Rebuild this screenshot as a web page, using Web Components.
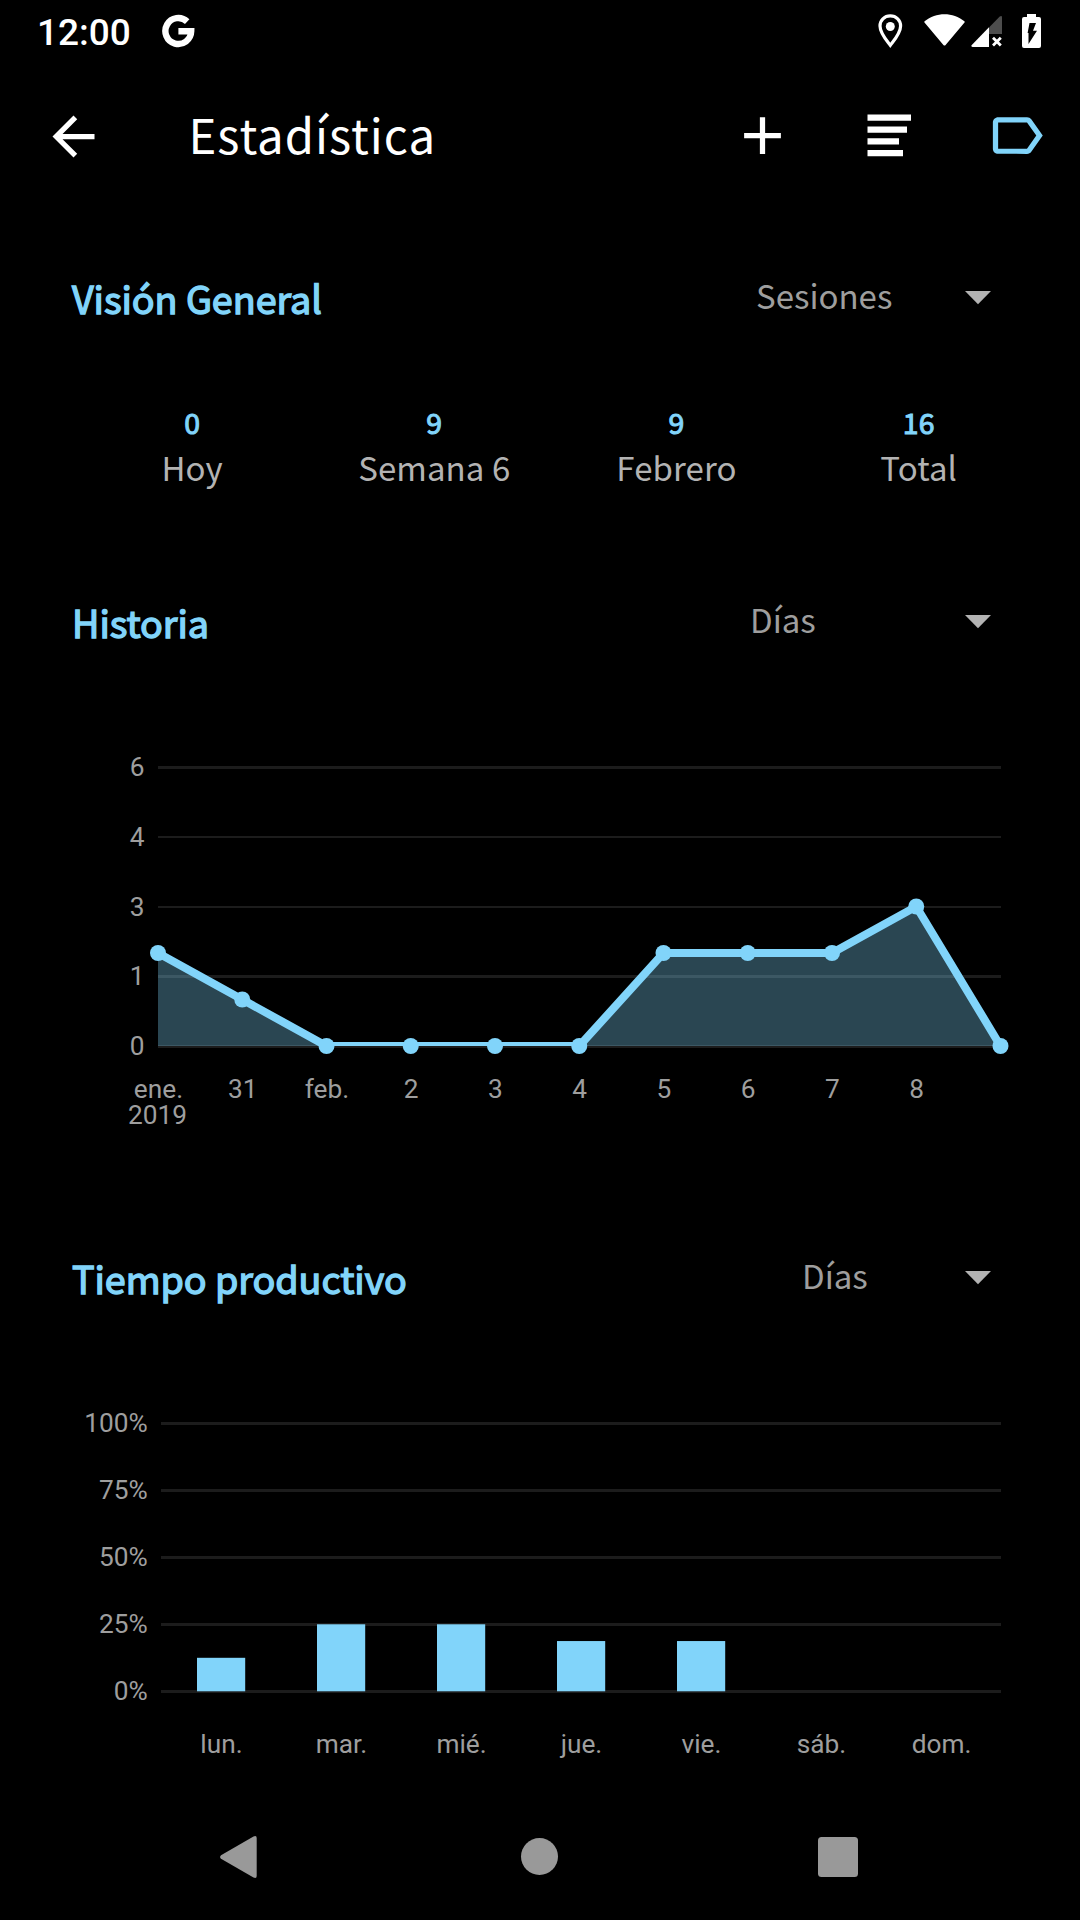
<!DOCTYPE html>
<html lang="es">
<head>
<meta charset="utf-8">
<title>Estadística</title>
<style>
  :root {
    --color-accent: #81d4fa;
    --color-text: #b3b3b3;
    --color-option: #9e9e9e;
    --font-main: "Noto Sans CJK SC", "Noto Sans", sans-serif;
    --font-system: Roboto, "Liberation Sans", sans-serif;
  }

  body {
    margin: 0;
    width: 1080px;
    height: 1920px;
    overflow: hidden;
    background: #000;
    color: #fff;
    font-family: var(--font-main);
  }
</style>
</head>
<body>
<stats-screen></stats-screen>

<script>
/** Base class: attaches the shadow root and renders once connected. */
class BaseElement extends HTMLElement {
  constructor() {
    super();
    this.attachShadow({ mode: 'open' });
  }

  connectedCallback() {
    this.shadowRoot.innerHTML = this.template();
  }
}

/** System status bar: clock, notification and signal icons. */
class StatusBar extends BaseElement {
  template() {
    return `
      <style>
        :host {
          display: flex;
          height: 63px;
          box-sizing: border-box;
          padding: 0 39px 0 37px;
          font: 500 37px/66px var(--font-system);
        }

        .clock {
          width: 124.5px;
        }

        svg {
          display: block;
          margin-top: 14px;
          flex-shrink: 0;
        }

        .icons {
          display: flex;
          margin-left: auto;
        }
      </style>
      <span class="clock">12:00</span>
      <svg width="33" height="36" viewBox="0 0 33 36">
        <path d="M25.2 7.6A12.9 13 0 1 0 29.2 17.3H16.4" fill="none" stroke="#fff" stroke-width="6.4"/>
      </svg>
      <div class="icons">
        <svg width="46" height="36" viewBox="0 0 46 36">
          <path d="M12.3 1.9C6.3 1.9 2 6.3 2 11.9C2 18.9 8.3 26 12.3 31.4C16.3 26 22.600 18.900 22.600 11.900C22.600 6.300 18.300 1.900 12.300 1.900Z" fill="none" stroke="#fff" stroke-width="3.200"/>
          <circle cx="12.300" cy="12.500" r="4.500" fill="#fff"/>
        </svg>
        <svg width="46.5" height="36" viewBox="0 0 46.5 36">
          <path d="M.6 7.2C12-2.2 29-2.2 40.4 7.2Q41 8 40.3 8.8L21.6 31Q20.5 32 19.4 31L.7 8.8Q0 8 .6 7.2Z" fill="#fff"/>
        </svg>
        <svg width="51.5" height="36" viewBox="0 0 51.5 36">
          <path d="M18 13.5L28.5 2.7Q31 1 31 3.500V20H18Z" fill="#4d4d4d"/>
          <path d="M18 13.2V33H1.5Q-.5 32.5.8 31Z" fill="#fff"/>
          <path d="M22 23.8L29.8 31.6M29.8 23.8L22 31.6" stroke="#fff" stroke-width="2.8"/>
        </svg>
        <svg width="19" height="36" viewBox="0 0 19 36">
          <path d="M5 0H14V3H17Q19 3 19 5V32Q19 34 17 34H2Q0 34 0 32V5Q0 3 2 3H5Z" fill="#fff"/>
          <path d="M7.5 9L14 9L11 16.7H15L6.5 30V19H5.6Z" fill="#000"/>
        </svg>
      </div>
    `;
  }
}

/** App bar with back button, title and toolbar actions. */
class AppBar extends BaseElement {
  template() {
    return `
      <style>
        :host {
          display: flex;
          height: 147px;
          box-sizing: border-box;
          padding: 41px 32px 0 42px;
        }

        svg {
          display: block;
          width: 63px;
          height: 63px;
          fill: #fff;
        }

        .back {
          margin-top: 1px;
        }

        h1 {
          margin: 0 0 0 83.5px;
          font-size: 47.3px;
          line-height: 60px;
          font-weight: 400;
          letter-spacing: 0.98px;
        }

        .actions {
          display: flex;
          gap: 64px;
          margin-left: auto;
        }
      </style>
      <svg class="back" viewBox="0 0 24 24"><path d="M20 11H7.83l5.59-5.59L12 4l-8 8 8 8 1.41-1.41L7.83 13H20v-2z"/></svg>
      <h1><slot></slot></h1>
      <div class="actions">
        <svg viewBox="0 0 24 24"><path d="M19 13h-6v6h-2v-6H5v-2h6V5h2v6h6v2z"/></svg>
        <svg viewBox="0 0 63 63"><path d="M9.5 10.5h43.5v6.3H9.5zM9.5 22.4h39.5v6.3H9.5zM9.5 34.2h31.5v6.3H9.5zM9.5 46h35.5v6.3H9.5z"/></svg>
        <svg viewBox="0 0 24 24" style="fill: var(--color-accent)"><path d="M17.63 5.84C17.27 5.33 16.67 5 16 5L5 5.01C3.9 5.01 3 5.9 3 7v10c0 1.1.9 1.99 2 1.99L16 19c.67 0 1.27-.33 1.63-.84L22 12l-4.37-6.16zM16 17H5V7h11l3.55 5L16 17z"/></svg>
      </div>
    `;
  }
}

/** Section with a heading, a spinner and slotted content. */
class StatsSection extends BaseElement {
  template() {
    return `
      <style>
        :host {
          display: block;
          box-sizing: border-box;
          padding-top: 57px;
        }

        header {
          display: flex;
          height: 60px;
          padding: 0 89.5px 0 72px;
        }

        h2 {
          margin: 0;
          flex: 1;
          font-size: 37.7px;
          line-height: 62px;
          font-weight: 400;
          color: var(--color-accent);
          -webkit-text-stroke: 1.4px var(--color-accent);
          letter-spacing: -0.05px;
        }

        .option {
          width: var(--option-width);
          padding-top: 2.5px;
          font-size: 33px;
          line-height: 50px;
          color: var(--color-option);
        }

        svg {
          display: block;
          margin-top: 24px;
        }
      </style>
      <header>
        <h2>${this.getAttribute('heading')}</h2>
        <span class="option">${this.getAttribute('option')}</span>
        <svg width="26" height="14" viewBox="0 0 26 14"><path d="M0 0H26L13 13.3Z" fill="#b3b3b3"/></svg>
      </header>
      <slot></slot>
    `;
  }
}

/** Single overview number with its caption. */
class StatValue extends BaseElement {
  template() {
    return `
      <style>
        :host {
          display: flex;
          flex-direction: column;
          align-items: center;
          color: var(--color-text);
          font-size: 33px;
          line-height: 50px;
          letter-spacing: 0.1px;
          white-space: nowrap;
        }

        .value {
          color: var(--color-accent);
          font-size: 28.4px;
          line-height: 40px;
          -webkit-text-stroke: 1px var(--color-accent);
        }
      </style>
      <span class="value">${this.getAttribute('value')}</span>
      <span><slot></slot></span>
    `;
  }
}

const CHART_STYLE = `
  <style>
    :host {
      display: block;
    }

    svg {
      display: block;
    }

    text {
      font: 26.25px var(--font-system);
      fill: #9e9e9e;
    }

    .grid {
      fill: #1c1c1c;
    }
  </style>
`;

/** Line chart of sessions per day. */
class HistoryChart extends BaseElement {
  template() {
    const values = [2, 1, 0, 0, 0, 0, 2, 2, 2, 3, 0];
    const labels = ['ene.', '31', 'feb.', '2', '3', '4', '5', '6', '7', '8'];
    // label, top of the line, thickness
    const ticks = [['6', 115, 3], ['4', 185, 2], ['3', 255, 2], ['1', 324, 3], ['0', 394, 3]];
    const left = 158;
    const bottom = 395;
    const x = i => left + i * 84.25;
    const y = v => bottom - v * 46.5;
    const points = values.map((v, i) => `${x(i)},${y(v)}`).join(' ');

    return `${CHART_STYLE}
      <svg width="1080" height="539" viewBox="0 0 1080 539">
        <clipPath id="plot"><rect x="150" y="0" width="860" height="395"/></clipPath>
        ${ticks.map(([label, top, h]) => `
          <rect class="grid" x="${left}" y="${top}" width="843" height="${h}"/>
          <text x="144.5" y="${top + 9.5}" text-anchor="end">${label}</text>
        `).join('')}
        <g clip-path="url(#plot)">
          <polygon points="${left},${bottom} ${points}" fill="#81d4fa" fill-opacity="0.33"/>
          <polyline points="${points}" fill="none" stroke="#81d4fa" stroke-width="8"/>
        </g>
        ${values.map((v, i) => `<circle cx="${x(i)}" cy="${y(v)}" r="8" fill="#81d4fa"/>`).join('')}
        ${labels.map((label, i) => `<text x="${x(i) + 0.5}" y="446.5" text-anchor="middle">${label}</text>`).join('')}
        <text x="157.6" y="472.5" text-anchor="middle">2019</text>
      </svg>
    `;
  }
}

/** Bar chart of productive time per weekday. */
class ProductiveChart extends BaseElement {
  template() {
    const days = [
      ['lun.', 12.5], ['mar.', 25], ['mié.', 25], ['jue.', 18.75],
      ['vie.', 18.75], ['sáb.', 0], ['dom.', 0]
    ];
    const ticks = ['100%', '75%', '50%', '25%', '0%'];
    const bottom = 384.3;
    const center = i => 221 + i * 120;

    return `${CHART_STYLE}
      <svg width="1080" height="487" viewBox="0 0 1080 487">
        ${ticks.map((label, i) => `
          <rect class="grid" x="161" y="${115 + i * 67}" width="840" height="3"/>
          <text x="147.7" y="${124.5 + i * 67}" text-anchor="end">${label}</text>
        `).join('')}
        ${days.map(([label, value], i) => `
          <rect x="${center(i) - 24}" y="${bottom - value * 2.68}" width="48.2" height="${value * 2.68}" fill="#81d4fa"/>
          <text x="${center(i) + 0.5}" y="446" text-anchor="middle">${label}</text>
        `).join('')}
      </svg>
    `;
  }
}

/** System navigation buttons. */
class NavigationBar extends BaseElement {
  template() {
    return `
      <style>
        :host {
          display: flex;
          height: 126px;
          align-items: center;
          justify-content: space-between;
          box-sizing: border-box;
          padding: 0 220px 0 218px;
        }

        svg {
          display: block;
          fill: #999;
        }
      </style>
      <svg width="42" height="44" viewBox="0 0 42 44"><path d="M3 20.2L35.5 1.5Q38.7.2 38.7 3V41Q38.7 43.8 35.5 42.5L3 23.8Q1.2 22 3 20.2Z"/></svg>
      <svg width="42" height="42" viewBox="0 0 42 42"><circle cx="21.5" cy="20.5" r="18.5"/></svg>
      <svg width="42" height="42" viewBox="0 0 42 42"><rect x="0" y="1" width="40" height="40" rx="3.5"/></svg>
    `;
  }
}

/** Whole statistics screen. */
class StatsScreen extends BaseElement {
  template() {
    return `
      <style>
        :host {
          display: flex;
          flex-direction: column;
          width: 1080px;
          height: 1920px;
        }

        .overview {
          height: 324px;
          --option-width: 208.5px;
        }

        .history {
          height: 656px;
          --option-width: 214.5px;
        }

        .productive {
          height: 604px;
          --option-width: 162.5px;
        }

        .values {
          display: grid;
          grid-template-columns: repeat(4, 242.2px);
          margin: 75px 0 0 71px;
        }
      </style>
      <status-bar></status-bar>
      <app-bar>Estadística</app-bar>
      <stats-section class="overview" heading="Visión General" option="Sesiones">
        <div class="values">
          <stat-value value="0">Hoy</stat-value>
          <stat-value value="9">Semana 6</stat-value>
          <stat-value value="9">Febrero</stat-value>
          <stat-value value="16">Total</stat-value>
        </div>
      </stats-section>
      <stats-section class="history" heading="Historia" option="Días">
        <history-chart></history-chart>
      </stats-section>
      <stats-section class="productive" heading="Tiempo productivo" option="Días">
        <productive-chart></productive-chart>
      </stats-section>
      <navigation-bar></navigation-bar>
    `;
  }
}

// Register the custom elements
customElements.define('status-bar', StatusBar);
customElements.define('app-bar', AppBar);
customElements.define('stats-section', StatsSection);
customElements.define('stat-value', StatValue);
customElements.define('history-chart', HistoryChart);
customElements.define('productive-chart', ProductiveChart);
customElements.define('navigation-bar', NavigationBar);
customElements.define('stats-screen', StatsScreen);
</script>
</body>
</html>
